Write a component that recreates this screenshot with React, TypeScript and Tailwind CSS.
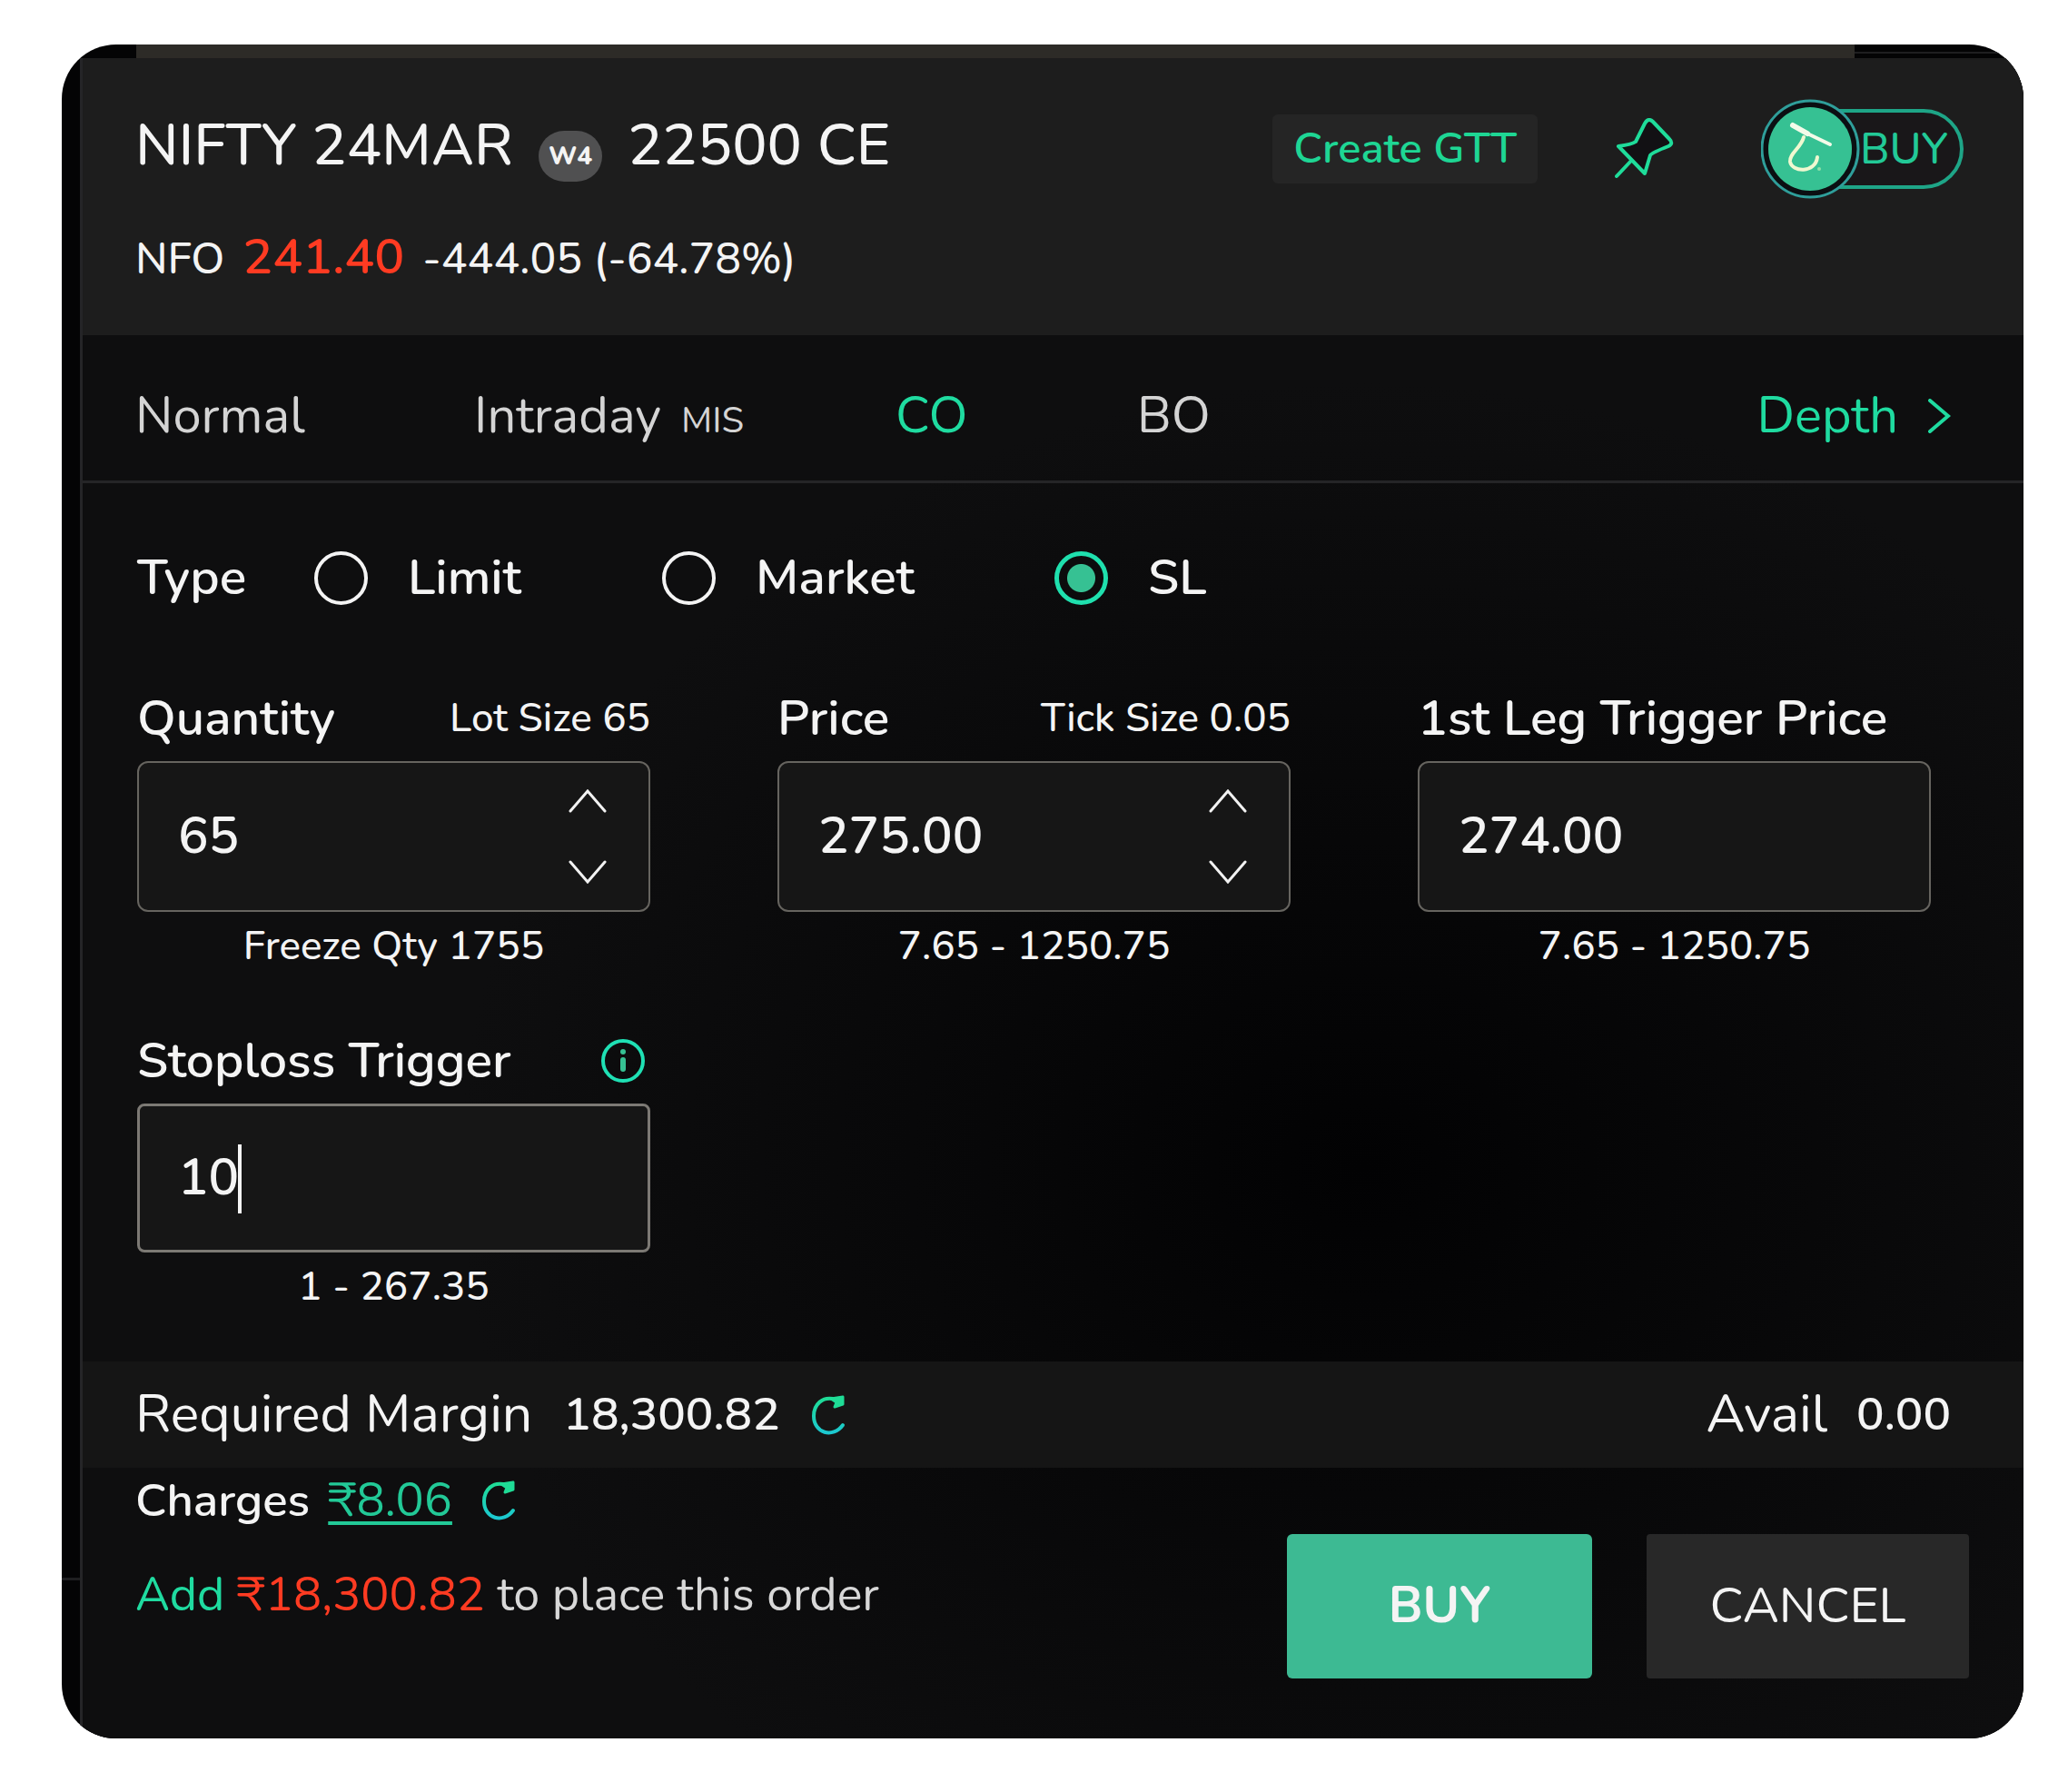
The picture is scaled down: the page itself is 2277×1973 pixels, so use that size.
import { useState } from 'react';

const TABS = [
  { id: 'normal', label: 'Normal' },
  { id: 'intraday', label: 'Intraday', suffix: 'MIS' },
  { id: 'co', label: 'CO' },
  { id: 'bo', label: 'BO' },
];

const TYPES = ['Limit', 'Market', 'SL'];

function PinIcon() {
  return (
    <svg viewBox="0 0 66 68" className="h-[68px] w-[66px]" fill="#121114" stroke="#1fdc9a" strokeWidth="4" strokeLinejoin="round" strokeLinecap="round">
      <path d="M5 31 Q20 29 24 26 L34 6 Q38 -1 43 4 L61 23 Q66 28 60 31 Q42 38 40 41 L34 61 Z" />
      <path d="M19 47 L3 64" />
    </svg>
  );
}

function RefreshIcon() {
  return (
    <svg viewBox="0 0 38 46" className="h-[46px] w-[38px]" fill="none">
      <defs>
        <linearGradient id="refresh" x1="0" y1="0" x2="0" y2="1">
          <stop offset="0%" stopColor="#1fdc96" />
          <stop offset="100%" stopColor="#1cc8d0" />
        </linearGradient>
      </defs>
      <path d="M28 6 C12 1 3 12 3 24 C3 43 24 49 35 34" stroke="url(#refresh)" strokeWidth="4" strokeLinecap="round" />
      <path d="M35 3 L35 11 L26 14 L28 9 L22 5 Z" fill="#1fdc96" stroke="#1fdc96" strokeWidth="3" strokeLinejoin="round" />
    </svg>
  );
}

function BuyToggle() {
  return (
    <button aria-label="Switch to sell" className="relative flex h-[110px] w-[223px] items-center text-[48px] font-medium text-[#22c997]">
      <svg viewBox="0 0 223 110" className="absolute inset-0" fill="none">
        <path d="M86 13 H179 A42 42 0 0 1 179 97 H86" fill="#191719" stroke="#1ea587" strokeWidth="4" />
        <circle cx="54" cy="55" r="53" fill="#0b0f12" stroke="#2f9e9a" strokeWidth="3" />
        <circle cx="54" cy="55" r="46" fill="#36c193" />
        <path d="M35 29 L51 38" stroke="#f3fbe9" strokeWidth="6" strokeLinecap="round" />
        <path d="M51 38 L76 50" stroke="#f3fbe9" strokeWidth="4" strokeLinecap="round" />
        <path d="M47 42 C44 54 31 60 32 69 C34 81 60 82 62 64" stroke="#f0f8d0" strokeWidth="4" strokeLinecap="round" />
        <circle cx="64" cy="77" r="2" fill="#8fe0a8" />
      </svg>
      <span className="relative ml-[109px]">BUY</span>
    </button>
  );
}

function Chevron({ d }: { d: string }) {
  return (
    <svg viewBox="0 0 42 26" className="h-[26px] w-[42px]" fill="none" stroke="#f2f2f2" strokeWidth="3" strokeLinecap="round">
      <path d={d} />
    </svg>
  );
}

type FieldProps = {
  id: string;
  label: string;
  note?: string;
  range: string;
  initial: string;
  stepper?: boolean;
};

function Field({ id, label, note, range, initial, stepper }: FieldProps) {
  const [value, setValue] = useState(initial);
  const decimals = initial.includes('.') ? 2 : 0;
  const step = decimals ? 0.05 : 65;
  const bump = (by: number) => setValue((Number(value) + by).toFixed(decimals));

  return (
    <div>
      <div className="mb-[11px] flex items-center justify-between whitespace-nowrap">
        <label htmlFor={id} className="text-[55px] leading-[72px] font-semibold">{label}</label>
        {note && <span className="text-[44px] leading-[56px] font-medium">{note}</span>}
      </div>
      <div className="flex h-[166px] items-center rounded-xl border-2 border-[#66645f] bg-[#161616] pr-[46px] pl-[43px]">
        <input
          id={id}
          value={value}
          onChange={e => setValue(e.target.value)}
          className="w-full min-w-0 bg-transparent text-[56px] font-semibold outline-none"
        />
        {stepper && (
          <div className="flex flex-col gap-[52px]">
            <button aria-label={`Increase ${label}`} onClick={() => bump(step)}><Chevron d="M2 24 L21 2 L40 24" /></button>
            <button aria-label={`Decrease ${label}`} onClick={() => bump(-step)}><Chevron d="M2 2 L21 24 L40 2" /></button>
          </div>
        )}
      </div>
      <p className="mt-[10px] text-center text-[44px] leading-[56px] font-medium">{range}</p>
    </div>
  );
}

export default function App() {
  const [tab, setTab] = useState('co');
  const [type, setType] = useState('SL');
  const [stoploss, setStoploss] = useState('10');

  return (
    <div className="min-h-[1973px] bg-white pt-[49px] pr-[49px] pb-[61px] pl-[68px] font-['Nunito','Lato',sans-serif] text-[#f4f4f4]">
      <div className="flex overflow-hidden rounded-[60px] bg-[#040405]">
        <div className="flex w-5 shrink-0 flex-col justify-end pb-[174px]">
          <div className="h-[3px] bg-[#1e1e20]" />
        </div>
        <main className="min-w-0 flex-1">
          <div className="flex h-[15px] pl-[62px]">
            <div className="flex-1 bg-[#2d2b27]" />
            <div className="h-[10px] w-[186px] border-b-2 border-[#1e1e20]" />
          </div>
          <div className="border-l-[3px] border-[#252527] bg-[#0e0e0f] bg-[radial-gradient(ellipse_at_66%_66%,#020203_0%,#0e0e0f_50%)]">
            <header className="flex items-start justify-between bg-[#1d1d1d] pr-[66px] pb-[55px] pl-[58px]">
              <div className="pt-14">
                <h1 className="flex items-center text-[64px] leading-[80px] font-medium">
                  NIFTY 24MAR
                  <span className="mx-7 mt-6 flex h-14 w-[70px] items-center justify-center rounded-full bg-[#505051] text-[28px] leading-none font-extrabold">W4</span>
                  22500 CE
                </h1>
                <p className="mt-[53px] flex h-[61px] items-baseline text-[48px] leading-[60px] font-medium">
                  NFO
                  <span className="mx-5 text-[55px] font-semibold text-[#ff3b22]">241.40</span>
                  -444.05 (-64.78%)
                </p>
              </div>
              <div className="flex items-center pt-[45px]">
                <button className="h-[76px] rounded-md bg-[#252525] px-[23px] text-[47px] font-semibold text-[#1ed694]">Create GTT</button>
                <button aria-label="Pin" className="mr-[96px] ml-[84px]"><PinIcon /></button>
                <BuyToggle />
              </div>
            </header>

            <nav className="flex items-center justify-between border-b-[3px] border-[#252527] pt-[53px] pr-[80px] pb-[35px] pl-[58px] text-[56px] leading-[72px]">
              <div className="grid grid-cols-[373px_464px_266px_auto]">
                {TABS.map(t => (
                  <button
                    key={t.id}
                    onClick={() => setTab(t.id)}
                    className={`text-left whitespace-nowrap ${t.id === tab ? 'text-[#1fdba0]' : 'text-[#d4d4d4]'}`}
                  >
                    {t.label}
                    {t.suffix && <span className="ml-[22px] text-[40px] leading-none">{t.suffix}</span>}
                  </button>
                ))}
              </div>
              <button className="flex items-center gap-8 text-[#1fdba0]">
                Depth
                <svg viewBox="0 0 26 38" className="h-[38px] w-[26px]" fill="none" stroke="currentColor" strokeWidth="4" strokeLinecap="round">
                  <path d="M3 2 L23 19 L3 36" />
                </svg>
              </button>
            </nav>

            <section className="pt-[64px] pr-[102px] pb-[54px] pl-[60px]">
              <div role="radiogroup" aria-labelledby="type-label" className="mb-[79px] grid h-20 grid-cols-[195px_383px_432px_auto] items-center text-[55px] leading-[72px] font-semibold">
                <span id="type-label">Type</span>
                {TYPES.map(t => (
                  <label key={t} className="flex items-center gap-11">
                    <input
                      type="radio"
                      name="type"
                      checked={type === t}
                      onChange={() => setType(t)}
                      className="size-[59px] appearance-none rounded-full border-4 border-[#f4f4f4] checked:border-[5px] checked:border-[#1fe0ae] checked:bg-[radial-gradient(circle,#36c193_15px,transparent_16px)]"
                    />
                    {t}
                  </label>
                ))}
              </div>

              <div className="grid grid-cols-3 gap-x-[140px] gap-y-[62px]">
                <Field id="quantity" label="Quantity" note="Lot Size 65" range="Freeze Qty 1755" initial="65" stepper />
                <Field id="price" label="Price" note="Tick Size 0.05" range="7.65 - 1250.75" initial="275.00" stepper />
                <Field id="trigger" label="1st Leg Trigger Price" range="7.65 - 1250.75" initial="274.00" />
                <div>
                  <div className="mb-[11px] flex items-center justify-between pr-[5px]">
                    <label htmlFor="stoploss" className="text-[55px] leading-[72px] font-semibold">Stoploss Trigger</label>
                    <svg viewBox="0 0 50 50" className="size-[50px]" fill="none" stroke="#1fe0b4" strokeWidth="4">
                      <circle cx="25" cy="25" r="22" />
                      <path d="M25 24 V34" stroke="#36c193" strokeWidth="6" strokeLinecap="round" />
                      <circle cx="25" cy="15" r="3" fill="#36c193" stroke="none" />
                    </svg>
                  </div>
                  <div className="relative flex h-[164px] items-center rounded-lg border-[3px] border-[#7c7974] bg-[#161616] px-[42px]">
                    <input
                      id="stoploss"
                      value={stoploss}
                      onChange={e => setStoploss(e.target.value)}
                      className="w-full min-w-0 bg-transparent text-[56px] font-semibold outline-none"
                    />
                    <span className="absolute top-[42px] left-[108px] h-[76px] w-1 bg-[#f4f4f4]" />
                  </div>
                  <p className="mt-[10px] text-center text-[44px] leading-[56px] font-medium">1 - 267.35</p>
                </div>
              </div>
            </section>

            <div className="flex h-[117px] items-center justify-between bg-[#151515] pr-[80px] pl-[58px] text-[59px]">
              <div className="flex items-center">
                Required Margin
                <span className="mx-[34px] text-[51px] font-semibold">18,300.82</span>
                <button aria-label="Refresh margin"><RefreshIcon /></button>
              </div>
              <div className="flex items-center gap-8">
                Avail
                <span className="text-[51px] font-semibold">0.00</span>
              </div>
            </div>

            <footer className="flex items-start justify-between pr-[60px] pb-[66px] pl-[58px]">
              <div className="pt-[6px] text-[52px] leading-[60px]">
                <div className="flex items-center">
                  <span className="text-[51px] font-semibold">Charges</span>
                  <a href="#charges" className="mr-8 ml-5 text-[#22c997] underline decoration-4 underline-offset-6">₹8.06</a>
                  <button aria-label="Refresh charges"><RefreshIcon /></button>
                </div>
                <p className="mt-11 text-[#d8d8d8]">
                  <a href="#add" className="text-[#1fdba0]">Add</a> <span className="text-[#ff3b22]">₹18,300.82</span> to place this order
                </p>
              </div>
              <div className="flex gap-[60px] pt-[73px] text-[55px]">
                <button className="h-[159px] w-[336px] rounded-md bg-[#3dba93] font-bold">BUY</button>
                <button className="h-[159px] w-[355px] rounded-sm bg-[#282828]">CANCEL</button>
              </div>
            </footer>
          </div>
        </main>
      </div>
    </div>
  );
}
